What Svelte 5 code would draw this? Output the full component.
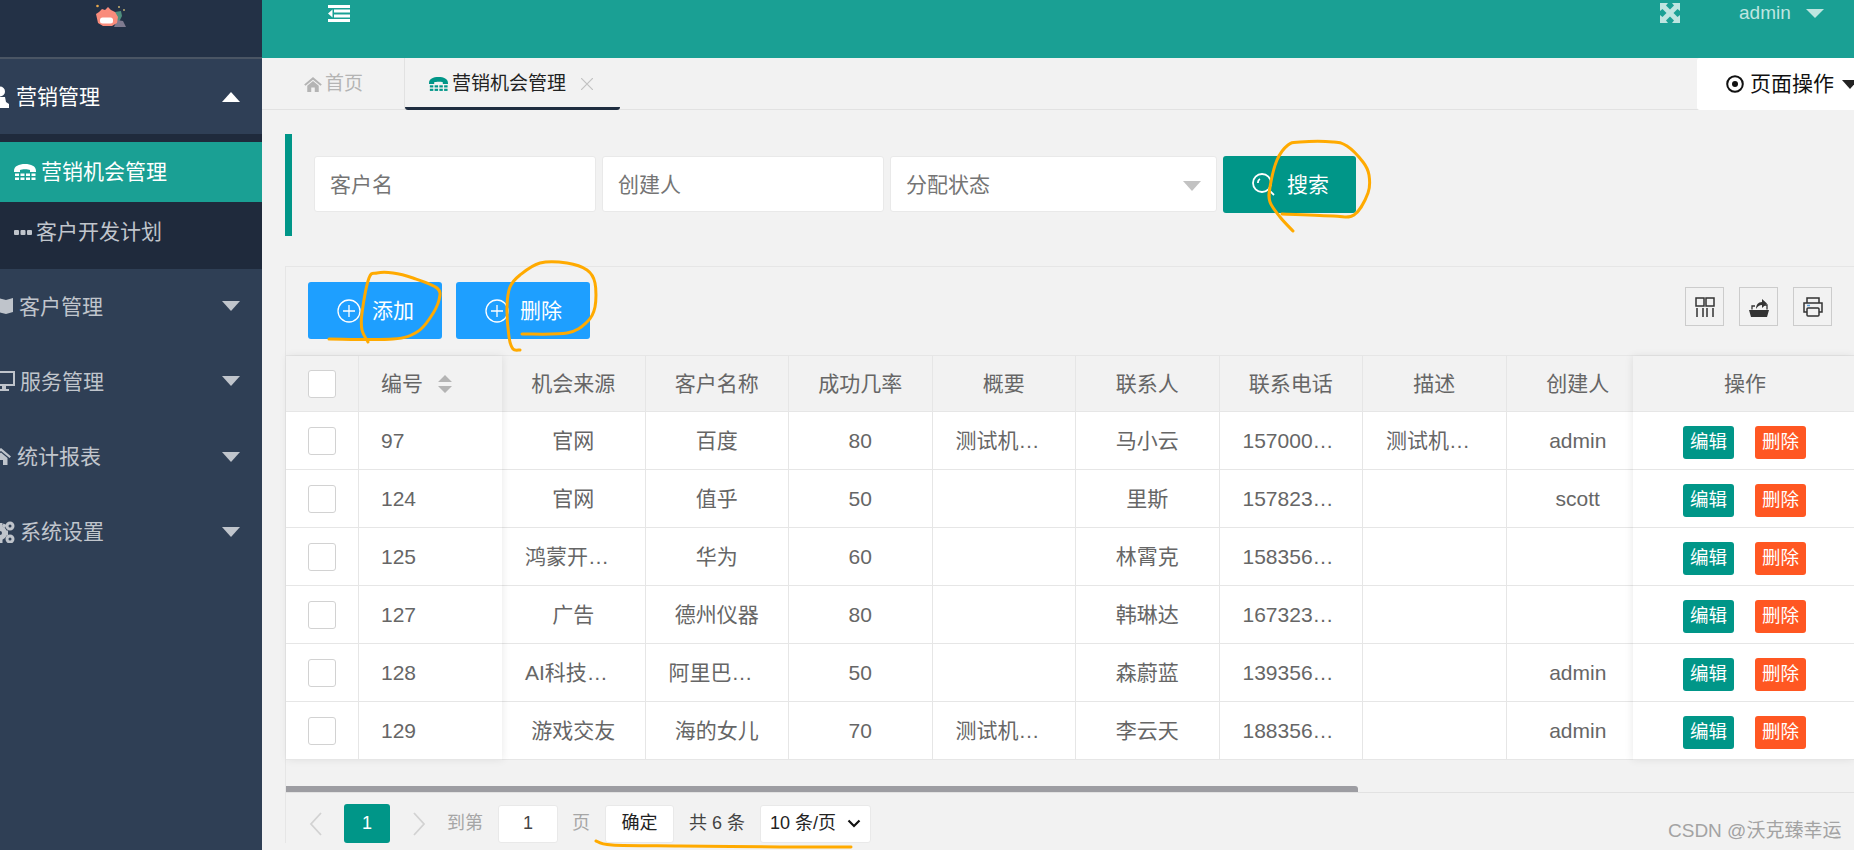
<script>
  const rows = [
    { id: '97', src: '官网', name: '百度', rate: '80', sum: '测试机…', who: '马小云', tel: '157000…', desc: '测试机…', by: 'admin' },
    { id: '124', src: '官网', name: '值乎', rate: '50', sum: '', who: '里斯', tel: '157823…', desc: '', by: 'scott' },
    { id: '125', src: '鸿蒙开…', name: '华为', rate: '60', sum: '', who: '林霄克', tel: '158356…', desc: '', by: '' },
    { id: '127', src: '广告', name: '德州仪器', rate: '80', sum: '', who: '韩琳达', tel: '167323…', desc: '', by: '' },
    { id: '128', src: 'AI科技…', name: '阿里巴…', rate: '50', sum: '', who: '森蔚蓝', tel: '139356…', desc: '', by: 'admin' },
    { id: '129', src: '游戏交友', name: '海的女儿', rate: '70', sum: '测试机…', who: '李云天', tel: '188356…', desc: '', by: 'admin' }
  ];
  const midHead = ['机会来源', '客户名称', '成功几率', '概要', '联系人', '联系电话', '描述', '创建人'];
  const midKeys = ['src', 'name', 'rate', 'sum', 'who', 'tel', 'desc', 'by'];

  function smooth(p) {
    let d = `M${p[0][0]} ${p[0][1]}`;
    for (let i = 0; i < p.length - 1; i++) {
      const a = p[i - 1] || p[i], b = p[i], c = p[i + 1], e = p[i + 2] || c;
      const c1 = [b[0] + (c[0] - a[0]) / 6, b[1] + (c[1] - a[1]) / 6];
      const c2 = [c[0] - (e[0] - b[0]) / 6, c[1] - (e[1] - b[1]) / 6];
      d += ` C${c1[0].toFixed(1)} ${c1[1].toFixed(1)} ${c2[0].toFixed(1)} ${c2[1].toFixed(1)} ${c[0]} ${c[1]}`;
    }
    return d;
  }
  const strokes = [
    [[1293,231],[1280,217],[1270,202],[1270,187],[1277,160],[1288,145],[1300,142],[1333,142],[1347,146],[1363,162],[1369,175],[1368,193],[1354,215],[1333,216],[1282,214]],
    [[329,339],[393,339],[417,332],[430,318],[439,300],[437,288],[413,278],[393,273],[377,273],[369,278],[362,313],[362,330],[368,342]],
    [[520,350],[513,349],[509,337],[507,307],[510,287],[520,275],[540,263],[567,263],[587,270],[595,283],[595,307],[587,322],[567,333],[522,334]],
    [[1675,467],[1717,467],[1728,457],[1737,433],[1737,417],[1727,408],[1703,407],[1680,413],[1667,427],[1664,440],[1670,450],[1687,455],[1737,458],[1817,458],[1830,450],[1833,433],[1827,420],[1800,407],[1773,403],[1757,408],[1740,430],[1737,457],[1740,472],[1753,479],[1766,479]],
    [[596,841],[612,845],[680,846],[780,847],[851,847]]
  ].map(smooth);
</script>

{#snippet phone(color)}
  <svg class="phone" viewBox="0 0 22 16" width="22" height="16" fill={color}>
    <path d="M0 7C0 2 5 0 11 0s11 2 11 7v1h-6V6c-2-1-8-1-10 0v2H0z"/>
    <rect x="1" y="9.500" width="4" height="2.500"/><rect x="6.500" y="9.500" width="4" height="2.500"/><rect x="12" y="9.500" width="4" height="2.500"/><rect x="17.500" y="9.500" width="4" height="2.500"/>
    <rect x="1" y="13.500" width="4" height="2.500"/><rect x="6.500" y="13.500" width="4" height="2.500"/><rect x="12" y="13.500" width="4" height="2.500"/><rect x="17.500" y="13.500" width="4" height="2.500"/>
  </svg>
{/snippet}

{#snippet plus()}
  <svg class="plus" viewBox="0 0 24 24" width="24" height="24" fill="none" stroke="#fff" stroke-width="1.300">
    <circle cx="12" cy="12" r="11"/><path d="M12 6v12M6 12h12"/>
  </svg>
{/snippet}

<div class="app">
  <aside class="side">
    <div class="logo">
      <svg viewBox="0 0 30 23" width="30" height="23">
        <circle cx="1.500" cy="2" r="1.300" fill="#e8a94c"/>
        <circle cx="23" cy="3" r="1" fill="#c9b070"/>
        <circle cx="28" cy="6" r="1" fill="#b8a870"/>
        <path d="M19 8l6-1 1 5-3 6-4-2z" fill="#4f8f7d"/>
        <path d="M18 23l3-7 6 1 3 6z" fill="#7f7b90"/>
        <path d="M0 10l3-2 3-3 3 1 3-3 3 3 4 2 3 5-1 6-5 3-9 0-5-3z" fill="#f98c7c"/>
        <rect x="4" y="13.500" width="13" height="6" rx="2.500" fill="#fff"/>
      </svg>
    </div>
    <div class="nav open">
      <svg class="ni user" viewBox="0 0 18 22" width="18" height="22" fill="#fff"><circle cx="9" cy="5.500" r="5"/><path d="M4 11h10l1 5 3 2v4H0v-4l3-2z"/></svg>
      <span>营销管理</span><i class="tri up"></i>
    </div>
    <div class="children">
      <div class="child active">{@render phone('#fff')}<span>营销机会管理</span></div>
      <div class="child dim">
        <svg class="dots" viewBox="0 0 18 5" width="18" height="5" fill="#bfc4cb"><rect width="5" height="5" rx="1"/><rect x="6.500" width="5" height="5" rx="1"/><rect x="13" width="5" height="5" rx="1"/></svg>
        <span>客户开发计划</span>
      </div>
    </div>
    <div class="nav">
      <svg class="ni map" viewBox="0 0 22 16" width="22" height="16" fill="#bfc4cb"><path d="M0 2l7-2 8 2 7-2v14l-7 2-8-2-7 2z"/></svg>
      <span>客户管理</span><i class="tri"></i>
    </div>
    <div class="nav">
      <svg class="ni mon" viewBox="0 0 22 20" width="22" height="20" fill="#bfc4cb"><path fill-rule="evenodd" d="M0 0h22v15H13v3h3v2H6v-2h3v-3H0zM2 2v11h18V2z"/></svg>
      <span>服务管理</span><i class="tri"></i>
    </div>
    <div class="nav">
      <svg class="ni home" viewBox="0 0 20 17" width="20" height="17" fill="#bfc4cb"><path d="M10 0l10 8.500-1.500 1.500L10 3 1.500 10 0 8.500zM3.500 10L10 4.500l6.500 5.500v7H12v-5H8v5H3.500z"/></svg>
      <span>统计报表</span><i class="tri"></i>
    </div>
    <div class="nav">
      <svg class="ni gear" viewBox="0 0 23 22" width="23" height="22" fill="#bfc4cb"><circle cx="8" cy="12" r="4.500" fill="none" stroke="#bfc4cb" stroke-width="5"/><path d="M5.500 2h5v4h-5zM5.500 18h5v4h-5zM0 9.500h3v5H0zM13 9.500h3v5h-3zM1.500 4l3-1.500 1.500 3-3 1.500zM14.500 4l-3-1.500-1.500 3 3 1.500z"/><circle cx="18" cy="5" r="3" fill="none" stroke="#bfc4cb" stroke-width="3"/><circle cx="18" cy="18" r="3" fill="none" stroke="#bfc4cb" stroke-width="3"/></svg>
      <span>系统设置</span><i class="tri"></i>
    </div>
  </aside>

  <main class="main">
    <header class="top">
      <svg class="toggle" viewBox="0 0 22 17" width="22" height="17" fill="#fff">
        <rect width="22" height="3"/><rect x="6" y="4.500" width="16" height="3"/><rect x="6" y="9.500" width="16" height="3"/><rect y="14" width="22" height="3"/><path d="M4.500 4.500v8L0 8.500z"/>
      </svg>
      <svg class="full" viewBox="0 0 20 20" width="20" height="20" fill="#bfe5e0">
        <path d="M0 0h8L6 2.500 10 6.500l4-4L12 0h8v8l-2.500-2-4 4 4 4L20 12v8h-8l2-2.500-4-4-4 4L8 20H0v-8l2.500 2 4-4-4-4L0 8z"/>
      </svg>
      <span class="user-name">admin</span><i class="caret-top"></i>
    </header>

    <nav class="tabs">
      <div class="tab first">
        <svg viewBox="0 0 20 17" width="18" height="15" fill="#b4b4b4"><path d="M10 0l10 8.500-1.500 1.500L10 3 1.500 10 0 8.500zM3.500 10L10 4.500l6.500 5.500v7H12v-5H8v5H3.500z"/></svg>
        <span>首页</span>
      </div>
      <div class="tab current">
        {@render phone('#009688')}
        <span>营销机会管理</span>
        <svg class="close" viewBox="0 0 12 12" width="12" height="12" stroke="#c2c2c2" stroke-width="1.200"><path d="M0 0l12 12M12 0L0 12"/></svg>
      </div>
      <div class="page-ops">
        <svg viewBox="0 0 18 18" width="18" height="18"><circle cx="9" cy="9" r="7.800" fill="none" stroke="#111" stroke-width="2"/><circle cx="9" cy="9" r="3" fill="#111"/></svg>
        <span>页面操作</span><i class="caret-dark"></i>
      </div>
    </nav>

    <div class="content">
      <section class="search">
        <div class="field w1">客户名</div>
        <div class="field w1">创建人</div>
        <div class="field w2">分配状态<i class="sel-caret"></i></div>
        <button class="btn-search">
          <svg viewBox="0 0 24 24" width="24" height="24" fill="none" stroke="#fff" stroke-width="1.800"><circle cx="10" cy="10" r="9"/><path d="M6 10a4 4 0 0 1 2-4M17 17l5 5"/></svg>
          <span>搜索</span>
        </button>
      </section>

      <section class="panel">
        <div class="toolbar">
          <button class="btn-blue">{@render plus()}<span>添加</span></button>
          <button class="btn-blue">{@render plus()}<span>删除</span></button>
          <div class="tools">
            <div class="tool">
              <svg viewBox="0 0 20 20" width="20" height="20" fill="none" stroke="#333" stroke-width="1.500"><rect x="1" y="1" width="8" height="8"/><rect x="11" y="1" width="8" height="8"/><path d="M2 11v9M8 11v9M12 11v9M18 11v9"/></svg>
            </div>
            <div class="tool">
              <svg viewBox="0 0 20 20" width="20" height="20" fill="#333"><path d="M0 13h20l-2 7H2z"/><path d="M3 12.500V9h3M14 8h4v4.500" fill="none" stroke="#333" stroke-width="1.300"/><path d="M7 12c0-4 2-7 6-7V2l5 4.500-5 4.500V8c-2.500 0-4.500 1.500-6 4z"/></svg>
            </div>
            <div class="tool">
              <svg viewBox="0 0 20 20" width="20" height="20" fill="none" stroke="#333" stroke-width="1.500"><path d="M4 6V1h12v5M4 15H1V6h18v9h-3"/><rect x="4" y="11" width="12" height="8" rx="1"/><path d="M4 8.500h3" stroke="#5b9bd5"/></svg>
            </div>
          </div>
        </div>

        <div class="table">
          <div class="fixed-left">
            <div class="row head">
              <div class="cell c-check"><i class="check"></i></div>
              <div class="cell c-id">编号
                <svg class="sort" viewBox="0 0 14 18" width="14" height="18" fill="#b4b4b4"><path d="M7 0l7 7H0zM0 11h14l-7 7z"/></svg>
              </div>
            </div>
            {#each rows as r}
              <div class="row">
                <div class="cell c-check"><i class="check"></i></div>
                <div class="cell c-id">{r.id}</div>
              </div>
            {/each}
          </div>

          <div class="middle">
            <div class="row head">
              {#each midHead as h}<div class="cell c-mid">{h}</div>{/each}
            </div>
            {#each rows as r}
              <div class="row">
                {#each midKeys as k}<div class="cell c-mid" class:clip={r[k].endsWith('…')}>{r[k]}</div>{/each}
              </div>
            {/each}
          </div>

          <div class="fixed-right">
            <div class="row head"><div class="cell c-op">操作</div></div>
            {#each rows as r}
              <div class="row">
                <div class="cell c-op actions">
                  <button class="mini teal">编辑</button>
                  <button class="mini orange">删除</button>
                </div>
              </div>
            {/each}
          </div>
        </div>

        <div class="scroll"><div class="thumb"></div></div>

        <div class="pager">
          <svg class="chev prev" viewBox="0 0 13 24" width="13" height="24" fill="none" stroke="#d2d2d2" stroke-width="1.800"><path d="M12 1L2 12l10 11"/></svg>
          <span class="cur">1</span>
          <svg class="chev next" viewBox="0 0 13 24" width="13" height="24" fill="none" stroke="#d2d2d2" stroke-width="1.800"><path d="M1 1l10 11L1 23"/></svg>
          <span class="lbl to">到第</span>
          <span class="box num">1</span>
          <span class="lbl pg">页</span>
          <span class="box ok">确定</span>
          <span class="total">共 6 条</span>
          <span class="box size">10 条/页
            <svg viewBox="0 0 14 9" width="14" height="9" fill="none" stroke="#111" stroke-width="2.200"><path d="M1.500 1.500L7 7l5.500-5.500"/></svg>
          </span>
        </div>
      </section>
    </div>
  </main>

  <svg class="ink" viewBox="0 0 1854 850" width="1854" height="850" fill="none" stroke="#ffaa00" stroke-width="3" stroke-linecap="round" stroke-linejoin="round">
    {#each strokes as d}<path {d}/>{/each}
  </svg>
  <div class="mark">CSDN @沃克臻幸运</div>
</div>

<style>
  :global(body) { margin: 0; background: #f2f2f2; }
  .app {
    position: relative; display: flex; width: 1854px; height: 850px; overflow: hidden;
    font: 21px/1.2 "Liberation Sans", "Noto Sans CJK SC", sans-serif; color: #666; background: #f2f2f2;
  }
  button { font: inherit; border: 0; padding: 0; color: #fff; }
  i { display: block; }

  .side { width: 262px; flex: none; background: #2f3f55; color: #c0c5cc; overflow: hidden; }
  .logo { height: 59px; padding: 4px 0 0 96px; box-sizing: border-box; background: #233146; border-bottom: 2px solid #4a5564; }
  .logo svg { display: block; }
  .nav { display: flex; align-items: center; height: 75.300px; position: relative; }
  .nav.open { height: 75px; color: #fff; background: #2f3f56; }
  .tri { position: absolute; left: 222px; top: 50%; margin-top: -5px; width: 0; height: 0;
    border-left: 9.500px solid transparent; border-right: 9.500px solid transparent; border-top: 10px solid #c0c5cc; }
  .tri.up { border-top: 0; border-bottom: 10px solid #fff; }
  .ni { flex: none; }
  .user { margin-left: -9px; margin-right: 7px; }
  .map { margin-left: -9px; margin-right: 6px; }
  .mon { margin-left: -7px; margin-right: 5px; }
  .home { margin-left: -9px; margin-right: 6px; }
  .gear { margin-left: -8px; margin-right: 5px; }
  .children { background: #1f2a3c; padding: 8px 0 6.500px; }
  .child { display: flex; align-items: center; height: 60px; padding-left: 14px; }
  .child.active { background: #1aa094; color: #fff; }
  .child.active .phone { margin-right: 5px; }
  .dots { margin-right: 4px; }

  .main { flex: 1; min-width: 0; display: flex; flex-direction: column; }
  .top { height: 58px; flex: none; background: #1aa094; display: flex; align-items: flex-start; color: #bfe5e0; box-sizing: border-box; }
  .toggle { margin: 5px 0 0 66px; }
  .full { margin: 3px 0 0 1310px; }
  .user-name { font-size: 19px; line-height: 26px; margin-left: 59px; }
  .caret-top { margin: 9px 0 0 15px; width: 0; height: 0;
    border-left: 9px solid transparent; border-right: 9px solid transparent; border-top: 9px solid #bfe5e0; }

  .tabs { height: 52px; flex: none; display: flex; box-sizing: border-box; border-bottom: 1px solid #e2e2e2; font-size: 19px; }
  .tab { display: flex; align-items: center; height: 52px; box-sizing: border-box; }
  .first { width: 143px; padding-left: 42px; border-right: 1px solid #e2e2e2; color: #b4b4b4; gap: 3px; }
  .current { width: 215px; padding: 3px 0 0 24px; border-bottom: 3px solid #1f2d40; color: #222; border-radius: 0 0 3px 3px; }
  .current .phone { width: 19px; height: 14px; margin-right: 4px; }
  .close { margin-left: 15px; }
  .page-ops { margin-left: auto; width: 157px; height: 52px; flex: none; box-sizing: border-box; padding-left: 29px; background: #fff; display: flex; align-items: center; gap: 6px; color: #111; font-size: 21px; border-radius: 3px 0 0 3px; white-space: nowrap; }
  .page-ops svg { flex: none; }
  .caret-dark { flex: none; width: 0; height: 0; margin-left: 2px; border-left: 8px solid transparent; border-right: 8px solid transparent; border-top: 9px solid #222; }

  .content { flex: 1; padding: 24px 0 0 23px; min-height: 0; }
  .search { height: 102px; box-sizing: border-box; border-left: 7px solid #009688; padding: 22px 0 0 22px; display: flex; align-items: flex-start; gap: 6px; }
  .field { position: relative; height: 56px; box-sizing: border-box; line-height: 56px; padding-left: 15px; background: #fff; border: 1px solid #e9e9e9; border-radius: 3px; color: #757575; }
  .w1 { width: 282px; }
  .w2 { width: 327px; }
  .sel-caret { position: absolute; top: 24px; right: 15px; width: 0; height: 0;
    border-left: 9.500px solid transparent; border-right: 9.500px solid transparent; border-top: 10px solid #c2c2c2; }
  .btn-search { width: 133px; height: 57px; background: #009688; border-radius: 3px; display: flex; align-items: center; padding-left: 29px; gap: 11px; box-sizing: border-box; }

  .panel { margin-top: 30px; border-top: 1px solid #e6e6e6; border-left: 1px solid #e6e6e6; }
  .toolbar { height: 88px; box-sizing: border-box; padding: 15px 22px 0; display: flex; align-items: flex-start; gap: 14px; }
  .btn-blue { width: 134px; height: 57px; background: #1e9fff; border-radius: 3px; display: flex; align-items: center; padding-left: 29px; gap: 11px; box-sizing: border-box; }
  .tools { margin-left: auto; display: flex; gap: 15px; margin-top: 5px; }
  .tool { width: 39px; height: 39px; box-sizing: border-box; border: 1.500px solid #ccc; display: flex; align-items: center; justify-content: center; }

  .table { display: flex; height: 404px; border-top: 1px solid #e6e6e6; }
  .fixed-left { position: relative; z-index: 2; flex: none; width: 216px; box-shadow: 1px 0 8px rgba(0,0,0,.08); }
  .middle { flex: 1; min-width: 0; overflow: hidden; }
  .fixed-right { position: relative; z-index: 2; flex: none; width: 221px; box-shadow: -1px 0 8px rgba(0,0,0,.08); }
  .row { display: flex; height: 58px; box-sizing: border-box; background: #fff; border-bottom: 1px solid #e6e6e6; }
  .row.head { height: 56px; background: #f2f2f2; }
  .cell { flex: none; height: 100%; box-sizing: border-box; display: flex; align-items: center; border-right: 1px solid #e6e6e6; }
  .c-check { width: 73px; padding-left: 22px; }
  .check { width: 28px; height: 28px; box-sizing: border-box; background: #fff; border: 1px solid #d2d2d2; border-radius: 3px; }
  .c-id { width: 143px; padding-left: 22px; border-right: 0; }
  .sort { margin-left: 15px; }
  .c-mid { width: 143.500px; justify-content: center; }
  .c-mid.clip { justify-content: flex-start; padding-left: 23px; }
  .c-op { width: 221px; justify-content: center; border-right: 0; padding-left: 3px; }
  .actions { gap: 21px; padding-top: 4px; padding-left: 2px; }
  .mini { width: 51px; height: 33px; font-size: 18.500px; border-radius: 3px; }
  .teal { background: #009688; }
  .orange { background: #ff5722; }

  .scroll { height: 33px; box-sizing: border-box; border-bottom: 1px solid #e2e2e2; padding-top: 26px; }
  .thumb { width: 1072px; height: 6px; background: #9d9da2; border-radius: 0 3px 0 0; }

  .pager { display: flex; align-items: center; height: 39px; margin-top: 11px; font-size: 18px; padding-left: 23px; }
  .chev { flex: none; }
  .cur { width: 46px; height: 39px; margin-left: 22px; display: flex; align-items: center; justify-content: center; background: #009688; color: #fff; border-radius: 3px; }
  .next { margin-left: 23px; }
  .lbl { color: #a6a6a6; }
  .to { margin-left: 21px; }
  .box { height: 38px; box-sizing: border-box; display: flex; align-items: center; justify-content: center; background: #fff; border: 1px solid #e9e9e9; border-radius: 3px; }
  .num { width: 60px; margin-left: 15px; color: #444; }
  .pg { margin-left: 14px; }
  .ok { width: 69px; margin-left: 15px; color: #222; }
  .total { margin-left: 15px; color: #444; width: 57px; white-space: nowrap; }
  .size { width: 111px; margin-left: 14px; color: #222; gap: 11px; }

  .ink { position: absolute; left: 0; top: 0; pointer-events: none; }
  .mark { position: absolute; left: 1668px; top: 820px; font-size: 19px; color: #a3a3a3; white-space: nowrap; }
</style>
